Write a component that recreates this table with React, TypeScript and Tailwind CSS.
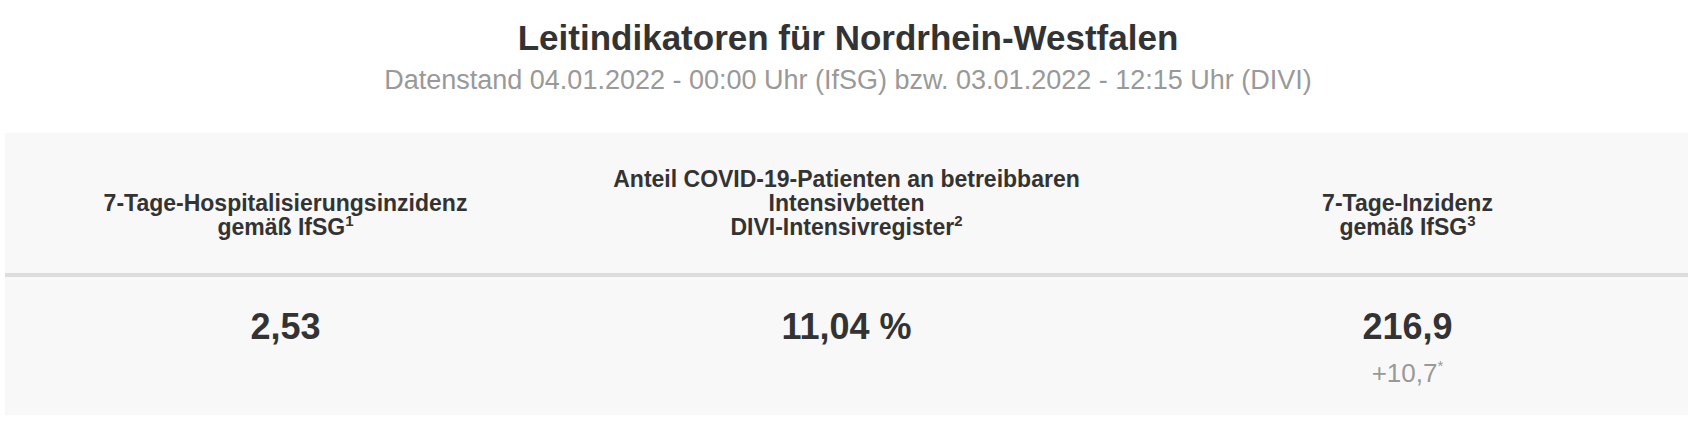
import React from "react";

const indikatoren = [
  {
    id: 1,
    titel: ["7-Tage-Hospitalisierungsinzidenz", "gemäß IfSG"],
    fussnote: "1",
    wert: "2,53",
    diff: null as string | null,
  },
  {
    id: 2,
    titel: ["Anteil COVID-19-Patienten an betreibbaren", "Intensivbetten", "DIVI-Intensivregister"],
    fussnote: "2",
    wert: "11,04 %",
    diff: null as string | null,
  },
  {
    id: 3,
    titel: ["7-Tage-Inzidenz", "gemäß IfSG"],
    fussnote: "3",
    wert: "216,9",
    diff: "+10,7",
  },
];

const App = () => {
  return (
    <div className="w-[1696px] h-[440px] bg-white font-['Liberation_Sans',Arial,sans-serif] text-[#333333]">
      {/* Kopfbereich */}
      <div className="pt-[18px] text-center">
        <h1 className="text-[35px] leading-[40px] font-bold">Leitindikatoren für Nordrhein-Westfalen</h1>
        <p className="mt-[7px] text-[27px] leading-[31px] text-[#999999]">
          Datenstand 04.01.2022 - 00:00 Uhr (IfSG) bzw. 03.01.2022 - 12:15 Uhr (DIVI)
        </p>
      </div>

      {/* Tabelle */}
      <div className="ml-[5px] mt-[37px] w-[1683px] bg-[#f8f8f8]">
        <div className="grid grid-cols-3 h-[144px] border-b-4 border-[#dddddd]">
          {indikatoren.map((ind) => (
            <div key={ind.id} className="flex flex-col items-center justify-end pb-[34px] text-center text-[23px] leading-[24px] font-bold">
              {ind.titel.map((zeile, i) => (
                <div key={i}>
                  {zeile}
                  {i === ind.titel.length - 1 && (
                    <sup className="text-[15px] leading-none top-[-2px] align-top">{ind.fussnote}</sup>
                  )}
                </div>
              ))}
            </div>
          ))}
        </div>
        <div className="grid grid-cols-3 h-[138px]">
          {indikatoren.map((ind) => (
            <div key={ind.id} className="flex flex-col items-center pt-[29px] text-center">
              <div className="text-[36px] leading-[41px] font-bold">{ind.wert}</div>
              {ind.diff && (
                <div className="mt-[11px] text-[26px] leading-[30px] text-[#999999]">
                  {ind.diff}
                  <sup className="text-[15px] leading-none top-0 align-top">*</sup>
                </div>
              )}
            </div>
          ))}
        </div>
      </div>
    </div>
  );
};

export default App;
